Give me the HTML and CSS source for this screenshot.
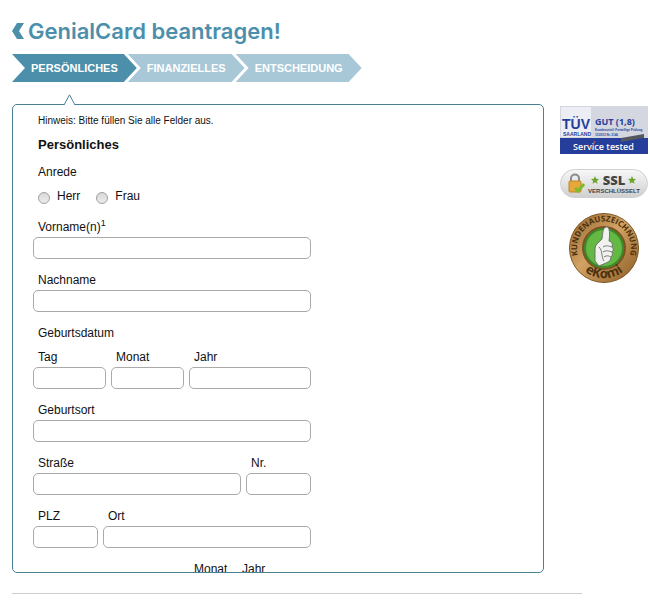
FILE: index.html
```html
<!DOCTYPE html>
<html lang="de">
<head>
  <meta charset="UTF-8">
  <meta name="viewport" content="width=device-width, initial-scale=1.0">
  <title>GenialCard beantragen</title>
  <link rel="stylesheet" href="styles.css">
</head>
<body>
  <h1 class="page-title">
    <svg class="title-arrow" width="12" height="16" viewBox="0 0 12 16" aria-hidden="true">
      <path d="M5 0H12L7 8L12 16H5L0 8Z" fill="#4c8fab"/>
    </svg>
    GenialCard beantragen!
  </h1>
  <ol class="steps">
    <li class="step active">Persönliches</li>
    <li class="step">Finanzielles</li>
    <li class="step">Entscheidung</li>
  </ol>
  <div class="content">
    <main class="panel">
      <svg class="pointer" width="13" height="11" viewBox="0 0 13 11" aria-hidden="true">
        <path d="M1 11L6.500 .8L12 11" fill="#fff" stroke="#4a7f94"/>
      </svg>
      <form class="form">
        <p class="hint">Hinweis: Bitte füllen Sie alle Felder aus.</p>
        <h2>Persönliches</h2>
        <fieldset class="salutation">
          <legend>Anrede</legend>
          <div class="radios">
            <label><input type="radio" name="anrede" value="herr">Herr</label>
            <label><input type="radio" name="anrede" value="frau">Frau</label>
          </div>
        </fieldset>
        <div class="field">
          <label for="vorname">Vorname(n)<sup>1</sup></label>
          <input type="text" id="vorname" name="vorname">
        </div>
        <div class="field">
          <label for="nachname">Nachname</label>
          <input type="text" id="nachname" name="nachname">
        </div>
        <fieldset class="birthday">
          <legend>Geburtsdatum</legend>
          <div class="row">
            <div class="field day">
              <label for="tag">Tag</label>
              <input type="text" id="tag" name="tag">
            </div>
            <div class="field day">
              <label for="monat">Monat</label>
              <input type="text" id="monat" name="monat">
            </div>
            <div class="field grow">
              <label for="jahr">Jahr</label>
              <input type="text" id="jahr" name="jahr">
            </div>
          </div>
        </fieldset>
        <div class="field">
          <label for="geburtsort">Geburtsort</label>
          <input type="text" id="geburtsort" name="geburtsort">
        </div>
        <div class="row">
          <div class="field grow">
            <label for="strasse">Straße</label>
            <input type="text" id="strasse" name="strasse">
          </div>
          <div class="field short">
            <label for="nr">Nr.</label>
            <input type="text" id="nr" name="nr">
          </div>
        </div>
        <div class="row">
          <div class="field short">
            <label for="plz">PLZ</label>
            <input type="text" id="plz" name="plz">
          </div>
          <div class="field grow">
            <label for="ort">Ort</label>
            <input type="text" id="ort" name="ort">
          </div>
        </div>
        <div class="row since">
          <div class="field since-month">
            <label for="seit-monat">Monat</label>
            <input type="text" id="seit-monat" name="seit_monat">
          </div>
          <div class="field grow">
            <label for="seit-jahr">Jahr</label>
            <input type="text" id="seit-jahr" name="seit_jahr">
          </div>
        </div>
      </form>
    </main>
    <aside class="seals">
      <svg class="seal-tuv" width="88" height="48" viewBox="0 0 88 48" role="img" aria-label="TÜV Saarland Service tested">
        <rect width="88" height="48" fill="#d4d7e0"/>
        <rect x="1" y="1" width="30" height="30" fill="#eceef3"/>
        <rect y="32" width="88" height="16" fill="#253e9b"/>
        <text x="2" y="23" class="tuv-logo">TÜV</text>
        <text x="3" y="30" class="tuv-land">SAARLAND</text>
        <text x="35" y="19" class="tuv-grade">GUT (1,8)</text>
        <text x="35" y="25" class="tuv-small">Kundenurteil: Freiwillige Prüfung</text>
        <text x="35" y="30" class="tuv-small">11/2013 Nr. 2146</text>
        <path d="M61 32L84 28V32L61 36Z" fill="#55575f"/>
        <text x="13" y="44" class="tuv-service">Service tested</text>
        <path d="M28 39L31 43L35 35" fill="none" stroke="#e06a50"/>
      </svg>
      <svg class="seal-ssl" width="88" height="29" viewBox="0 0 88 29" role="img" aria-label="SSL verschlüsselt">
        <defs>
          <linearGradient id="pill" x2="0" y2="1">
            <stop offset="0" stop-color="#f8f8f8"/>
            <stop offset="1" stop-color="#cfcfcf"/>
          </linearGradient>
        </defs>
        <rect x=".5" y=".5" width="87" height="28" rx="14" fill="url(#pill)" stroke="#d0d0d0"/>
        <path d="M11 13V9.500a4 4 0 0 1 8 0V13" fill="none" stroke="#8b8b8b" stroke-width="2"/>
        <rect x="9" y="12" width="12" height="11" rx="1" fill="#e7a83b" stroke="#c08428"/>
        <path d="M15 19L18 22L24 15" fill="none" stroke="#7dbb2c" stroke-width="3"/>
        <path id="star" d="M35 7l1.200 2.700 2.800.3-2.100 1.900.6 2.900-2.500-1.500-2.500 1.500.6-2.900L31 10l2.800-.3z" fill="#6ea42c"/>
        <use href="#star" x="37"/>
        <text x="54" y="16" class="ssl-name">SSL</text>
        <text x="54" y="24" class="ssl-text">VERSCHLÜSSELT</text>
      </svg>
      <svg class="seal-ekomi" width="70" height="70" viewBox="0 0 70 70" role="img" aria-label="eKomi Kundenauszeichnung">
        <defs>
          <linearGradient id="bronze" x2="1" y2="1">
            <stop offset="0" stop-color="#8f6128"/>
            <stop offset=".45" stop-color="#d2a364"/>
            <stop offset="1" stop-color="#8a5a22"/>
          </linearGradient>
          <path id="arc-top" d="M13 51A27 27 0 1 1 57 51"/>
          <path id="arc-bottom" d="M9 51A31 31 0 0 0 61 51"/>
        </defs>
        <circle cx="35" cy="35" r="34.500" fill="url(#bronze)" stroke="#7e5623"/>
        <circle cx="35" cy="35" r="21" fill="#3d8a2a" stroke="#7b5424" stroke-width="2"/>
        <circle cx="35" cy="35" r="18" fill="#63b944"/>
        <text class="ekomi-ring"><textPath href="#arc-top" startOffset="50%">KUNDENAUSZEICHNUNG</textPath></text>
        <text class="ekomi-name"><textPath href="#arc-bottom" startOffset="50%">eKomi</textPath></text>
        <path d="M27 32L33 26C34 22 33 15 37 14C41 13 41 21 40 28C43 29 44 31 43 34C45 36 44 38 43 39C44 41 43 43 42 44C42 47 40 49 37 50L30 53L26 48V35Z" fill="#f1f1ef" stroke="#6d736c"/>
        <path d="M34 34C37 32 40 33 43 34M34 39C37 37 40 38 43 39M35 44C38 42 40 43 42 44M30 34C34 38 32 44 35 48" stroke="#777" fill="none"/>
      </svg>
    </aside>
  </div>
  <hr class="divider">
</body>
</html>
```

FILE: styles.css
```css
* {
  box-sizing: border-box;
}
body {
  margin: 0;
  padding: 16px 2px 0 12px;
  background: #fff;
  color: #111;
  font-family: "Liberation Sans", Arial, sans-serif;
  font-size: 12px;
  line-height: 16px;
}
.page-title {
  display: flex;
  align-items: center;
  gap: 4px;
  margin: 0 0 8px;
  color: #4c8fab;
  font-family: Inter, "Century Gothic", sans-serif;
  font-size: 22px;
  font-weight: 600;
  line-height: 30px;
}
.steps {
  display: flex;
  margin: 0 0 22px;
  padding: 0;
  list-style: none;
}
.step {
  padding: 1px 19px 0;
  background: #a8c8d7;
  color: #fff;
  font-size: 11px;
  font-weight: bold;
  line-height: 27px;
  text-transform: uppercase;
  clip-path: polygon(0 0, calc(100% - 13px) 0, 100% 50%, calc(100% - 13px) 100%, 0 100%, 13px 50%);
}
.step + .step {
  margin-left: -9px;
}
.step.active {
  background: #4c8fab;
}
.content {
  display: flex;
  align-items: flex-start;
  gap: 16px;
}
.panel {
  position: relative;
  flex: 1;
  height: calc(100vh - 136px);
  border: 1px solid #4a7f94;
  border-radius: 5px;
}
.pointer {
  position: absolute;
  top: -11px;
  left: 50px;
}
.form {
  height: 100%;
  padding: 8px 20px 0;
  overflow: hidden;
}
.hint {
  margin: 0 0 8px 5px;
  font-size: 10px;
}
h2 {
  margin: 0 0 11px 5px;
  font-size: 13px;
  line-height: 16px;
}
fieldset {
  margin: 0;
  padding: 0;
  border: none;
}
legend {
  margin-bottom: 8px;
  padding: 0 0 0 5px;
}
.salutation {
  margin-bottom: 15px;
}
.radios {
  display: flex;
  gap: 16px;
  padding-left: 5px;
}
.radios label {
  display: flex;
}
.radios input {
  appearance: none;
  width: 12px;
  height: 12px;
  margin: 4px 7px 0 0;
  border: 1px solid #a0a0a0;
  border-radius: 50%;
  background: linear-gradient(#d8d8d8, #ececec);
}
.radios input:checked {
  background: #4c8fab;
}
.field {
  display: flex;
  flex-direction: column;
  gap: 2px;
  max-width: 278px;
  margin-bottom: 13px;
}
.field label {
  padding-left: 5px;
}
.field input {
  width: 100%;
  height: 22px;
  padding: 2px 6px;
  border: 1px solid #aaa;
  border-radius: 5px;
  background: #fff;
  font: inherit;
}
sup {
  font-size: 9px;
  line-height: 0;
}
.row {
  display: flex;
  gap: 5px;
  max-width: 278px;
}
.day {
  width: 73px;
}
.short {
  width: 65px;
}
.grow {
  flex: 1;
}
.since {
  padding-left: 156px;
}
.since-month {
  width: 43px;
}
.seals {
  display: flex;
  flex-direction: column;
  align-items: center;
  width: 88px;
  padding-top: 2px;
}
.seal-ssl {
  margin: 15px 0;
}
.divider {
  margin: 20px 66px 0 0;
  border: none;
  border-top: 1px solid #ccc;
}
svg {
  display: block;
}
.tuv-logo {
  fill: #253e9b;
  font-family: "Liberation Sans Narrow", "Liberation Sans", sans-serif;
  font-size: 14px;
  font-weight: bold;
}
.tuv-land {
  fill: #253e9b;
  font-size: 5px;
  font-weight: bold;
}
.tuv-grade {
  fill: #253e9b;
  font-family: "Open Sans", sans-serif;
  font-size: 9px;
  font-weight: bold;
}
.tuv-small {
  fill: #253e9b;
  font-size: 3px;
  font-weight: bold;
}
.tuv-service {
  fill: #fff;
  font-family: "Open Sans", sans-serif;
  font-size: 9px;
  font-weight: 600;
}
.ssl-name {
  fill: #444;
  font-family: "Open Sans", sans-serif;
  font-size: 13px;
  font-weight: 800;
  text-anchor: middle;
}
.ssl-text {
  fill: #444;
  font-size: 6px;
  font-weight: bold;
  text-anchor: middle;
}
.ekomi-ring {
  fill: #4b300f;
  font-family: "Open Sans", sans-serif;
  font-size: 8px;
  font-weight: bold;
  text-anchor: middle;
}
.ekomi-name {
  fill: #4b300f;
  font-family: "Open Sans", sans-serif;
  font-size: 13px;
  font-weight: bold;
  text-anchor: middle;
}
```
